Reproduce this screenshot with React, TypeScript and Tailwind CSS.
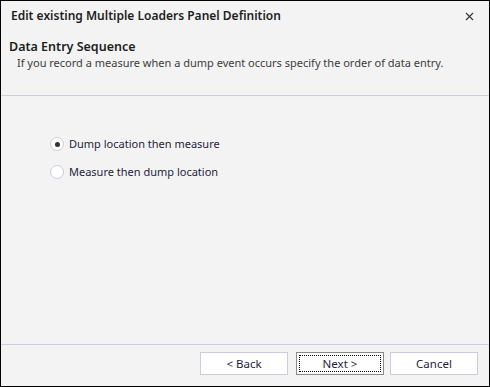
import { X } from "lucide-react";

const font = { fontFamily: '"Noto Sans", "Open Sans", sans-serif' };

const Radio = ({ checked, label }: { checked?: boolean; label: string }) => (
  <label className="flex items-center h-[28px]">
    <span className="w-[14px] h-[14px] rounded-full border border-[#cfcbdc] bg-white flex items-center justify-center mr-[5px]">
      {checked && <span className="w-[5px] h-[5px] rounded-full bg-[#333333]" />}
    </span>
    <span className="text-[11px] text-[#1e1e3c]">{label}</span>
  </label>
);

const App = () => {
  return (
    <div
      className="w-[490px] h-[387px] bg-[#f3f3f3] border border-black flex flex-col"
      style={font}
    >
      {/* title bar */}
      <div className="h-[30px] flex items-center justify-between pl-[10px] pr-[13px]">
        <span className="text-[12px] font-semibold text-[#1e1e1e]">
          Edit existing Multiple Loaders Panel Definition
        </span>
        <X className="w-[13px] h-[13px] text-[#333333]" strokeWidth={2} />
      </div>

      {/* header */}
      <div className="h-[65px] border-b border-[#cfcbdf] pl-[8px] pt-[8px]">
        <div className="text-[12.5px] font-semibold text-[#1e1e1e] leading-[16px]">
          Data Entry Sequence
        </div>
        <div className="text-[11px] text-[#3c3c3c] leading-[15px] pl-[8px]">
          If you record a measure when a dump event occurs specify the order of data entry.
        </div>
      </div>

      {/* content */}
      <div className="flex-1 pl-[49px] pt-[34px]">
        <Radio checked label="Dump location then measure" />
        <Radio label="Measure then dump location" />
      </div>

      {/* footer */}
      <div className="h-[42px] border-t border-[#cfcbdf] flex items-start justify-end pt-[7px] pr-[11px] gap-[6px]">
        <button className="w-[88px] h-[23px] bg-white border border-[#cfcbdf] text-[11.5px] text-[#1e1e3c] mr-[2px]">
          &lt; Back
        </button>
        <button className="w-[88px] h-[23px] bg-white border border-[#8a8a8a] p-[2px] text-[11.5px] text-[#1e1e3c]">
          <span className="w-full h-full flex items-center justify-center border border-dotted border-black">
            Next &gt;
          </span>
        </button>
        <button className="w-[88px] h-[23px] bg-white border border-[#cfcbdf] text-[11.5px] text-[#1e1e3c]">
          Cancel
        </button>
      </div>
    </div>
  );
};

export default App;
